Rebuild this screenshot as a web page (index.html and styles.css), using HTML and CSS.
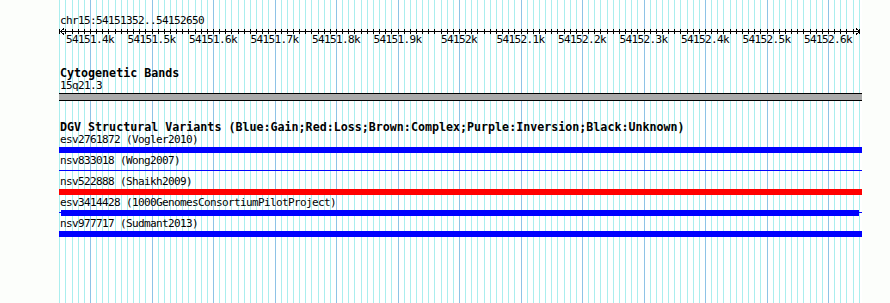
FILE: index.html
```html
<!DOCTYPE html>
<html>
<head>
<meta charset="utf-8">
<title>chr15:54151352..54152650</title>
<link rel="stylesheet" href="styles.css">
</head>
<body>
  <div id="panel">
    <svg id="grid" width="803" height="303"></svg>
    <div id="ruler-title" class="small layer">chr15:54151352..54152650</div>
    <svg id="ruler" class="layer" width="803" height="23">
      <line class="axis" x1="1" y1="4.5" x2="801" y2="4.5" />
      <polyline class="axis" points="5,1.5 1.5,4.5 5,7.5" />
      <polyline class="axis" points="797,1.5 800.5,4.5 797,7.5" />
    </svg>

    <div id="cyto-title" class="track-title layer">Cytogenetic Bands</div>
    <div class="small layer">15q21.3</div>
    <div id="band" class="layer"></div>

    <div id="dgv-title" class="track-title layer">DGV Structural Variants (Blue:Gain;Red:Loss;Brown:Complex;Purple:Inversion;Black:Unknown)</div>
    <div class="feature layer">
      <div class="small">esv2761872 (Vogler2010)</div>
      <div class="bar-row"><div class="bar gain"></div></div>
    </div>
    <div class="feature layer">
      <div class="small">nsv833018 (Wong2007)</div>
      <div class="bar-row"><div class="bar gain thin"></div></div>
    </div>
    <div class="feature layer">
      <div class="small">nsv522888 (Shaikh2009)</div>
      <div class="bar-row"><div class="bar loss"></div></div>
    </div>
    <div class="feature layer">
      <div class="small">esv3414428 (1000GenomesConsortiumPilotProject)</div>
      <div class="bar-row"><div class="bar gain ends"></div></div>
    </div>
    <div class="feature layer">
      <div class="small">nsv977717 (Sudmant2013)</div>
      <div class="bar-row"><div class="bar gain"></div></div>
    </div>
  </div>

  <script>
    var svgNS = "http://www.w3.org/2000/svg";
    var grid = document.getElementById("grid");
    var ruler = document.getElementById("ruler");

    function make(tag, attrs) {
      var el = document.createElementNS(svgNS, tag);
      for (var k in attrs) el.setAttribute(k, attrs[k]);
      return el;
    }

    // one line every 10bp, a darker one every 100bp
    for (var j = -5; j <= 125; j++) {
      var x = Math.round(31 + j * 6.15) + 0.5;
      var major = j % 10 === 0;
      grid.appendChild(make("line", { x1: x, y1: 0, x2: x, y2: 303, "class": major ? "major" : "minor" }));
      ruler.appendChild(make("line", { x1: x, y1: 2, x2: x, y2: 7, "class": "axis" }));
    }

    for (var k = 0; k <= 12; k++) {
      var label;
      if (k < 6) label = "54151." + (4 + k) + "k";
      else if (k === 6) label = "54152k";
      else label = "54152." + (k - 6) + "k";
      var t = make("text", { x: 31 + k * 61.5, y: 16, "text-anchor": "middle", "class": "tick-label" });
      t.textContent = label;
      ruler.appendChild(t);
    }
  </script>
</body>
</html>
```

FILE: styles.css
```css
body {
  margin: 0;
  background-color: #fcfefb;
  font-family: "DejaVu Sans Mono", monospace;
  color: #000;
}

#panel {
  position: relative;
  margin-left: 59px;
  width: 803px;
  height: 303px;
  background-color: #fff;
  overflow: hidden;
}

#grid {
  position: absolute;
  top: 0;
  left: 0;
}

#grid line {
  shape-rendering: crispEdges;
}

#grid .minor {
  stroke: #aaeeee;
}

#grid .major {
  stroke: #8ec3e6;
}

.layer {
  position: relative;
}

.small {
  font-size: 11px;
  letter-spacing: -0.62px;
  line-height: 13px;
  height: 13px;
  padding-left: 1px;
  white-space: nowrap;
}

#ruler-title {
  margin-top: 14px;
}

#ruler {
  display: block;
}

#ruler .axis {
  stroke: #000;
  stroke-width: 1;
  fill: none;
  shape-rendering: crispEdges;
}

#ruler .tick-label {
  font-family: "DejaVu Sans Mono", monospace;
  font-size: 11px;
  letter-spacing: -0.62px;
  fill: #000;
}

.track-title {
  font-weight: bold;
  font-size: 11.67px;
  line-height: 12px;
  height: 12px;
  padding-left: 1px;
  white-space: nowrap;
}

#cyto-title {
  margin-top: 17px;
}

#band {
  margin-top: 1px;
  height: 8px;
  box-sizing: border-box;
  border-top: 1px solid #000;
  border-bottom: 1px solid #000;
  background-color: #aaaaaa;
}

#dgv-title {
  margin-top: 21px;
  line-height: 11px;
  height: 11px;
}

.bar-row {
  height: 8px;
  padding-top: 1px;
  box-sizing: border-box;
}

.bar {
  height: 6px;
}

.gain {
  background-color: #0000ff;
}

.loss {
  background-color: #ff0000;
}

.thin {
  height: 1px;
  margin-top: 2px;
}

.ends {
  position: relative;
  margin: 0 3px 0 2px;
}

.ends::before {
  content: "";
  position: absolute;
  left: -2px;
  right: -3px;
  top: 2px;
  height: 1px;
  background-color: #0000ff;
}
```
